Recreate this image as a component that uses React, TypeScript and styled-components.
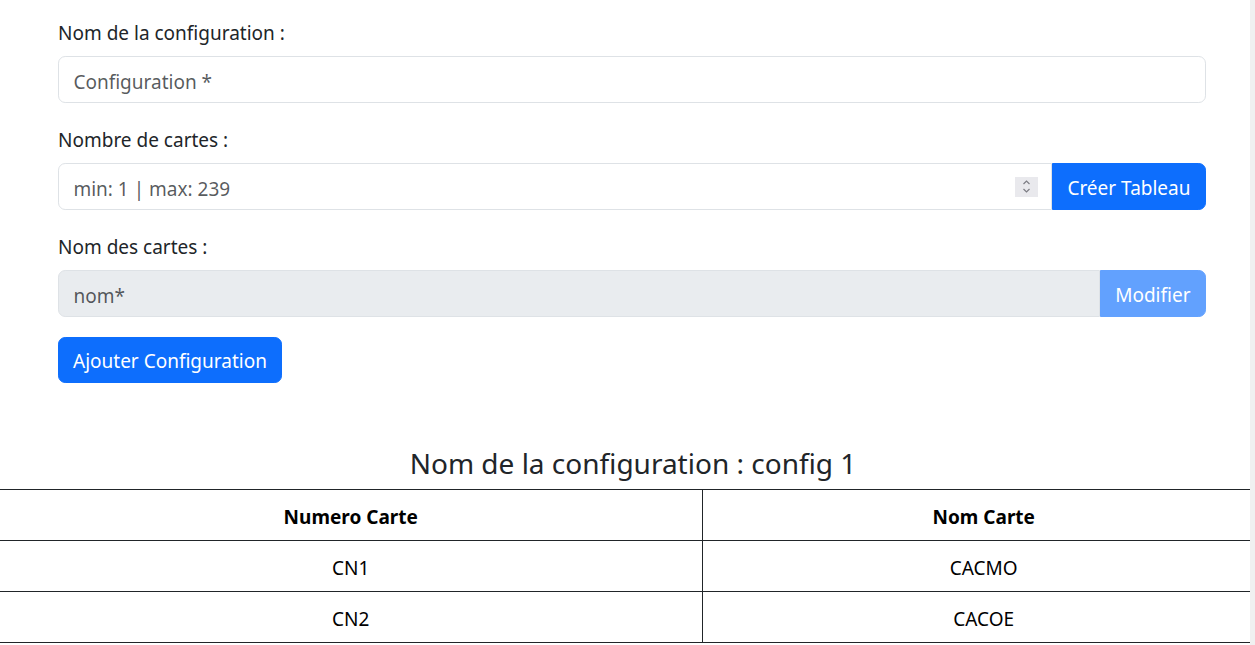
import React from "react";
import styled, { createGlobalStyle } from "styled-components";

const GlobalStyle = createGlobalStyle`
  * { box-sizing: border-box; }
  html, body { margin: 0; padding: 0; background: #fff; }
  body {
    font-family: "Noto Sans", "Open Sans", sans-serif;
    font-size: 19px;
    line-height: 28.8px;
    color: #212529;
  }
`;

const Viewport = styled.div`
  position: relative;
  width: 1255px;
  height: 645px;
  overflow: hidden;
`;

const Main = styled.main`
  width: 1266px;
  padding-top: 18.6px;
`;

const ScrollTrack = styled.div`
  position: absolute;
  top: 0;
  right: 0;
  width: 5px;
  height: 100%;
  background: #f0f0f0;
`;

const Form = styled.form`
  width: 1148px;
  margin-left: 58px;
  display: flex;
  flex-direction: column;
`;

const Field = styled.div`
  display: flex;
  flex-direction: column;
  margin-bottom: 22.6px;
  &:last-of-type { margin-bottom: 20px; }
`;

const Label = styled.label`
  display: block;
  line-height: 28.8px;
  margin-bottom: 8.6px;
`;

const InputGroup = styled.div`
  display: flex;
  width: 100%;
`;

const Input = styled.input<{ $joined?: boolean }>`
  display: block;
  width: 100%;
  min-width: 0;
  height: 47px;
  padding: 9.5px 14.4px 5px;
  font: inherit;
  color: #212529;
  background: #fff;
  border: 1px solid #dee2e6;
  border-radius: ${(p) => (p.$joined ? "7.2px 0 0 7.2px" : "7.2px")};
  outline: none;
  ${(p) => (p.$joined ? "flex: 1 1 auto;" : "")}
  &::placeholder { color: rgba(33, 37, 41, 0.75); }
  &:disabled { background: #e9ecef; }
`;

const NumberWrap = styled.div`
  position: relative;
  flex: 1 1 auto;
  display: flex;
`;

const Spinner = styled.span`
  position: absolute;
  right: 14px;
  top: 14px;
  width: 23px;
  height: 20px;
  background: #e9e9ed;
  display: flex;
  align-items: center;
  justify-content: center;
`;

const Button = styled.button<{ $group?: boolean }>`
  height: ${(p) => (p.$group ? "47px" : "46px")};
  padding: 3px 14.5px 0;
  font: inherit;
  color: #fff;
  background: #0d6efd;
  border: 1px solid #0d6efd;
  border-radius: ${(p) => (p.$group ? "0 7.2px 7.2px 0" : "7.2px")};
  cursor: pointer;
  white-space: nowrap;
  flex-shrink: 0;
  &:disabled {
    background: #62a1fe;
    border-color: #62a1fe;
    cursor: default;
  }
`;

const SubmitButton = styled(Button)`
  align-self: flex-start;
  padding-left: 14px;
  padding-right: 14px;
`;

const Title = styled.h4`
  margin: 64px 0 0;
  text-align: center;
  font-size: 28px;
  font-weight: 400;
  line-height: 1.2;
  padding-bottom: 8.5px;
`;

const Table = styled.table`
  width: 100%;
  border-collapse: collapse;
  color: #000;
`;

const Th = styled.th<{ $w?: number }>`
  width: ${(p) => (p.$w ? `${p.$w}px` : "auto")};
  height: 51px;
  border: 1px solid #212529;
  text-align: center;
  font-weight: 700;
  padding: 4px 0 0;
  &:first-child { border-left: none; }
`;

const Td = styled.td`
  height: 51px;
  border: 1px solid #212529;
  text-align: center;
  padding: 4px 0 0;
  &:first-child { border-left: none; }
`;

const rows = [
  { num: "CN1", nom: "CACMO" },
  { num: "CN2", nom: "CACOE" },
];

function SpinIcon() {
  return (
    <svg width="9" height="15" viewBox="0 0 9 15" fill="none" stroke="#7d7d84" strokeWidth="1.2">
      <polyline points="1.5,5 4.5,2 7.5,5" />
      <polyline points="1.5,10 4.5,13 7.5,10" />
    </svg>
  );
}

export default function App() {
  return (
    <>
      <GlobalStyle />
      <Viewport>
        <Main>
          <Form onSubmit={(e) => e.preventDefault()}>
            <Field>
              <Label>Nom de la configuration :</Label>
              <Input placeholder="Configuration *" />
            </Field>
            <Field>
              <Label>Nombre de cartes :</Label>
              <InputGroup>
                <NumberWrap>
                  <Input $joined placeholder="min: 1 | max: 239" />
                  <Spinner>
                    <SpinIcon />
                  </Spinner>
                </NumberWrap>
                <Button type="button" $group>Créer Tableau</Button>
              </InputGroup>
            </Field>
            <Field>
              <Label>Nom des cartes :</Label>
              <InputGroup>
                <Input $joined placeholder="nom*" disabled />
                <Button type="button" $group disabled>Modifier</Button>
              </InputGroup>
            </Field>
            <SubmitButton type="submit">Ajouter Configuration</SubmitButton>
          </Form>
          <Title>Nom de la configuration : config 1</Title>
          <Table>
            <thead>
              <tr>
                <Th $w={702}>Numero Carte</Th>
                <Th>Nom Carte</Th>
              </tr>
            </thead>
            <tbody>
              {rows.map((r) => (
                <tr key={r.num}>
                  <Td>{r.num}</Td>
                  <Td>{r.nom}</Td>
                </tr>
              ))}
            </tbody>
          </Table>
        </Main>
        <ScrollTrack />
      </Viewport>
    </>
  );
}
